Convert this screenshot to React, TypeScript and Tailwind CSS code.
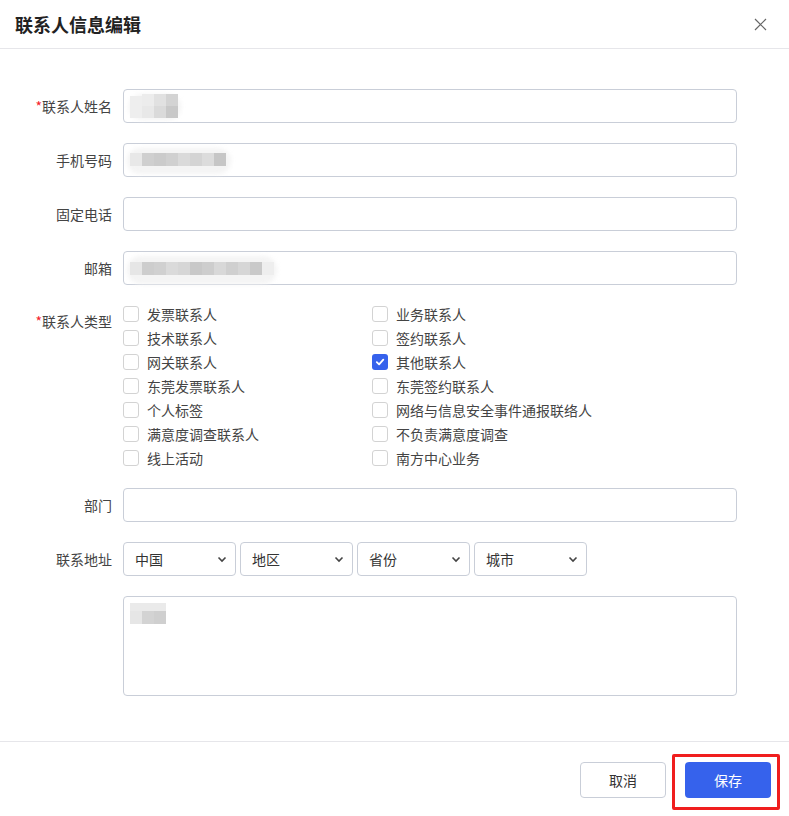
import React from "react";

const font = { fontFamily: '"Noto Sans CJK SC", "Noto Sans", sans-serif' };

type Block = [number, number, number, number, string]; // x, y, w, h, color

function Blur({ blocks, halo }: { blocks: Block[]; halo?: [number, number, number, number] }) {
  return (
    <div className="absolute inset-0 pointer-events-none">
      {halo && (
        <div
          className="absolute rounded-full bg-[#f4f4f4] blur-[2px]"
          style={{ left: halo[0], top: halo[1], width: halo[2], height: halo[3] }}
        />
      )}
      {blocks.map((b, i) => (
        <div key={i} className="absolute" style={{ left: b[0], top: b[1], width: b[2], height: b[3], background: b[4] }} />
      ))}
    </div>
  );
}

function Label({ text, required, className = "" }: { text: string; required?: boolean; className?: string }) {
  return (
    <div className={`w-[112px] shrink-0 text-right text-[14px] leading-[20px] text-[#444] ${className}`}>
      {required && <span className="text-[#f5222d]">*</span>}
      {text}
    </div>
  );
}

function TextInput({ children }: { children?: React.ReactNode }) {
  return (
    <div className="relative ml-[11px] h-[34px] w-[614px] rounded-[4px] border border-[#c9ced8] bg-white">{children}</div>
  );
}

function Checkbox({ label, checked }: { label: string; checked?: boolean }) {
  return (
    <div className="flex h-[24px] items-center">
      {checked ? (
        <div className="flex h-[16px] w-[16px] items-center justify-center rounded-[3px] bg-[#3662ec]">
          <svg width="10" height="10" viewBox="0 0 10 10">
            <path d="M1.8 5.2 L4.1 7.4 L8.3 2.6" fill="none" stroke="white" strokeWidth="1.8" strokeLinecap="round" strokeLinejoin="round" />
          </svg>
        </div>
      ) : (
        <div className="h-[16px] w-[16px] rounded-[3px] border border-[#d3d3d3] bg-white" />
      )}
      <span className="ml-[8px] text-[14px] leading-[20px] text-[#444]">{label}</span>
    </div>
  );
}

function Select({ text }: { text: string }) {
  return (
    <div className="flex h-[34px] w-[113px] items-center justify-between rounded-[4px] border border-[#c9ced8] bg-white pl-[11px] pr-[8px]">
      <span className="text-[14px] leading-[20px] text-[#333]">{text}</span>
      <svg width="10" height="7" viewBox="0 0 10 7">
        <path d="M1.5 1.5 L5 5 L8.5 1.5" fill="none" stroke="#444" strokeWidth="1.6" />
      </svg>
    </div>
  );
}

const left = ["发票联系人", "技术联系人", "网关联系人", "东莞发票联系人", "个人标签", "满意度调查联系人", "线上活动"];
const right = ["业务联系人", "签约联系人", "其他联系人", "东莞签约联系人", "网络与信息安全事件通报联络人", "不负责满意度调查", "南方中心业务"];

export default function App() {
  return (
    <div className="relative h-[816px] w-[789px] overflow-hidden bg-white" style={font}>
      {/* header */}
      <div className="flex h-[49px] items-center justify-between border-b border-[#e6e6ea] pl-[15px] pr-[22px]">
        <div className="text-[18px] font-bold leading-[24px] text-[#222]">联系人信息编辑</div>
        <svg width="13" height="13" viewBox="0 0 13 13">
          <path d="M1 1 L12 12 M12 1 L1 12" stroke="#666" strokeWidth="1.2" />
        </svg>
      </div>

      {/* body */}
      <div className="flex flex-col pt-[40px]">
        <div className="flex items-center">
          <Label text="联系人姓名" required />
          <TextInput>
            <Blur
              halo={[5, 4, 52, 26]}
              blocks={[
                [6, 6, 12, 22, "#eeeeee"],
                [18, 4, 12, 12, "#ececec"],
                [30, 4, 12, 12, "#e1e1e1"],
                [42, 4, 12, 12, "#d3d3d3"],
                [18, 16, 12, 12, "#e8e8e8"],
                [30, 16, 12, 12, "#dadada"],
                [42, 16, 12, 12, "#c8c8c8"],
              ]}
            />
          </TextInput>
        </div>
        <div className="mt-[20px] flex items-center">
          <Label text="手机号码" />
          <TextInput>
            <Blur
              halo={[3, 4, 104, 26]}
              blocks={[
                [6, 9, 12, 13, "#e8e8e8"],
                [18, 9, 12, 13, "#cfcfcf"],
                [30, 9, 12, 13, "#cbcbcb"],
                [42, 9, 12, 13, "#d0d0d0"],
                [54, 9, 12, 13, "#dadada"],
                [66, 9, 12, 13, "#d4d4d4"],
                [78, 9, 12, 13, "#dcdcdc"],
                [90, 9, 12, 13, "#c6c6c6"],
              ]}
            />
          </TextInput>
        </div>
        <div className="mt-[20px] flex items-center">
          <Label text="固定电话" />
          <TextInput />
        </div>
        <div className="mt-[20px] flex items-center">
          <Label text="邮箱" />
          <TextInput>
            <Blur
              halo={[3, 4, 150, 28]}
              blocks={[
                [6, 10, 12, 13, "#e6e6e6"],
                [18, 10, 12, 13, "#cdcdcd"],
                [30, 10, 12, 13, "#d0d0d0"],
                [42, 10, 12, 13, "#dadada"],
                [54, 10, 12, 13, "#d6d6d6"],
                [66, 10, 12, 13, "#c8c8c8"],
                [78, 10, 12, 13, "#cdcdcd"],
                [90, 10, 12, 13, "#d8d8d8"],
                [102, 10, 12, 13, "#cfcfcf"],
                [114, 10, 12, 13, "#d6d6d6"],
                [126, 10, 12, 13, "#c9c9c9"],
                [138, 10, 12, 13, "#eeeeee"],
              ]}
            />
          </TextInput>
        </div>

        {/* types */}
        <div className="mt-[17px] flex">
          <Label text="联系人类型" required className="pt-[9px]" />
          <div className="ml-[11px] grid w-[500px] grid-cols-[249px_1fr]">
            <div className="flex flex-col">
              {left.map((t) => (
                <Checkbox key={t} label={t} />
              ))}
            </div>
            <div className="flex flex-col">
              {right.map((t) => (
                <Checkbox key={t} label={t} checked={t === "其他联系人"} />
              ))}
            </div>
          </div>
        </div>

        <div className="mt-[18px] flex items-center">
          <Label text="部门" />
          <TextInput />
        </div>

        <div className="mt-[20px] flex items-center">
          <Label text="联系地址" />
          <div className="ml-[11px] flex gap-[4px]">
            <Select text="中国" />
            <Select text="地区" />
            <Select text="省份" />
            <Select text="城市" />
          </div>
        </div>

        <div className="mt-[20px] flex">
          <div className="w-[112px] shrink-0" />
          <div className="relative ml-[11px] h-[100px] w-[614px] rounded-[4px] border border-[#c9ced8] bg-white">
            <Blur
              blocks={[
                [6, 6, 36, 8, "#eaeaea"],
                [6, 14, 12, 13, "#e6e6e6"],
                [18, 14, 12, 13, "#d3d3d3"],
                [30, 14, 12, 13, "#cfcfcf"],
              ]}
            />
          </div>
        </div>
      </div>

      {/* footer */}
      <div className="absolute bottom-0 left-0 right-0 h-[75px] border-t border-[#e6e6ea]">
        <div className="flex justify-end gap-[19px] pr-[18px] pt-[20px]">
          <button className="h-[36px] w-[86px] rounded-[4px] border border-[#c9ced8] bg-white text-[14px] text-[#333]">
            取消
          </button>
          <button className="h-[36px] w-[86px] rounded-[4px] bg-[#3662ec] text-[14px] text-white">保存</button>
        </div>
        <div className="absolute left-[672px] top-[12px] h-[56px] w-[108px] rounded-[2px] border-[3px] border-[#f01e1e]" />
      </div>
    </div>
  );
}
